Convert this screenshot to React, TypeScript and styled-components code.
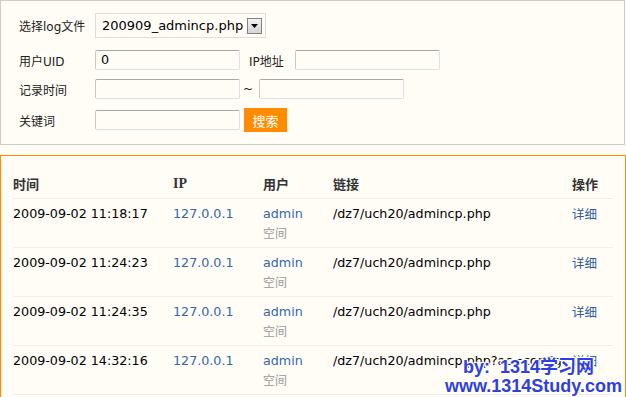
import React from "react";
import styled, { createGlobalStyle } from "styled-components";

const Global = createGlobalStyle`
  html, body { margin: 0; padding: 0; overflow: hidden; background: #fffdf6; }
  body {
    font-family: "DejaVu Sans", "Noto Sans CJK SC", sans-serif;
    font-size: 12px;
    color: #000;
  }
`;

const Page = styled.div`
  position: relative;
  width: 626px;
  height: 397px;
  overflow: hidden;
`;

const SearchPanel = styled.div`
  border: 1px solid #cccccc;
  background: #fffdf6;
  padding: 12px 0 12px 18px;
  box-sizing: border-box;
  width: 625px;
  display: flex;
  flex-direction: column;
  gap: 9px;
`;

const FormRow = styled.div<{ $h: number; $extra?: number }>`
  display: flex;
  align-items: center;
  height: ${(p) => p.$h}px;
  margin-bottom: ${(p) => p.$extra ?? 0}px;
`;

const Label = styled.span<{ $w?: number; $ml?: number }>`
  width: ${(p) => (p.$w ? `${p.$w}px` : "auto")};
  margin-left: ${(p) => p.$ml ?? 0}px;
  margin-right: ${(p) => (p.$w ? 0 : 11)}px;
  color: #222;
  white-space: nowrap;
`;

const TextInput = styled.div`
  width: 145px;
  height: 20px;
  box-sizing: border-box;
  border: 1px solid #dde1e6;
  border-top-color: #a8a8a8;
  border-left-color: #c8c8c8;
  border-radius: 2px;
  background: #fffdf6;
  padding-left: 5px;
  line-height: 18px;
  font-size: 12.7px;
  color: #000;
`;

const SelectBox = styled.div`
  display: flex;
  align-items: center;
  height: 25px;
  box-sizing: border-box;
  border: 1px solid #dddddd;
  background: #fffdf6;
  padding: 0 3px 0 6px;
  gap: 4px;
  font-size: 13px;
  color: #000;
`;

const DropButton = styled.span`
  display: flex;
  align-items: center;
  justify-content: center;
  width: 15px;
  height: 16px;
  box-sizing: border-box;
  border: 1px solid #808080;
  background: linear-gradient(#f2f2f2, #d4d4d4);
`;

const Tilde = styled.span`
  margin: 0 6px 0 3px;
  color: #222;
`;

const SearchButton = styled.button`
  margin-left: 4px;
  width: 43px;
  height: 24px;
  border: none;
  background: #ff8c00;
  color: #fff;
  font-family: "Noto Sans CJK SC", sans-serif;
  font-size: 13px;
  padding: 0;
`;

const ListPanel = styled.div`
  margin-top: 10px;
  border: 1px solid #ff8c00;
  background: #fffdf6;
  padding: 13px 11px 0 12px;
  height: 400px;
`;

const Row = styled.div<{ $head?: boolean }>`
  display: grid;
  grid-template-columns: 160px 90px 70px 239px 41px;
  width: 600px;
  border-bottom: 1px solid #eeeeee;
  padding: 5px 0;
  line-height: 19px;
  font-size: 12.7px;
  ${(p) => p.$head && `font-weight: bold; color: #333; font-size: 13px;`}
`;

const HeadCell = styled.div<{ $serif?: boolean }>`
  font-family: ${(p) =>
    p.$serif
      ? `"Liberation Serif", "Noto Sans CJK SC", serif`
      : `"Noto Sans CJK SC", sans-serif`};
  font-size: ${(p) => (p.$serif ? 14 : 13)}px;
`;

const Cell = styled.div`
  white-space: nowrap;
  overflow: hidden;
`;

const Link = styled.span`
  color: #3366aa;
  display: block;
`;

const Sub = styled.span`
  color: #999999;
  display: block;
  font-size: 12px;
  font-family: "Noto Sans CJK SC", sans-serif;
`;

const OpLink = styled.span`
  color: #2b5b9b;
  font-size: 12.5px;
  font-family: "Noto Sans CJK SC", sans-serif;
`;

const Watermark = styled.div`
  position: absolute;
  right: 4px;
  bottom: 1px;
  text-align: center;
  font-family: "Liberation Sans", "Noto Sans CJK SC", sans-serif;
  font-weight: bold;
  font-size: 18px;
  line-height: 19px;
  color: #3040dc;
  text-shadow: 1px 0 0 #fff, -1px 0 0 #fff, 0 1px 0 #fff, 0 -1px 0 #fff,
    1px 1px 1px #fff, -1px -1px 1px #fff, 1px -1px 1px #fff, -1px 1px 1px #fff;
`;

const WatermarkLine = styled.div<{ $shift?: number }>`
  padding-right: ${(p) => p.$shift ?? 0}px;
`;

const logs = [
  { time: "2009-09-02 11:18:17", link: "/dz7/uch20/admincp.php" },
  { time: "2009-09-02 11:24:23", link: "/dz7/uch20/admincp.php" },
  { time: "2009-09-02 11:24:35", link: "/dz7/uch20/admincp.php" },
  { time: "2009-09-02 14:32:16", link: "/dz7/uch20/admincp.php?ac=config" },
];

export default function App() {
  return (
    <Page>
      <Global />
      <SearchPanel>
        <FormRow $h={25} $extra={3}>
          <Label $w={76}>选择log文件</Label>
          <SelectBox>
            200909_admincp.php
            <DropButton>
              <svg width="7" height="4" viewBox="0 0 7 4">
                <path d="M0 0 L7 0 L3.5 4 Z" fill="#000" />
              </svg>
            </DropButton>
          </SelectBox>
        </FormRow>
        <FormRow $h={20}>
          <Label $w={76}>用户UID</Label>
          <TextInput>0</TextInput>
          <Label $ml={9}>IP地址</Label>
          <TextInput />
        </FormRow>
        <FormRow $h={20}>
          <Label $w={76}>记录时间</Label>
          <TextInput />
          <Tilde>~</Tilde>
          <TextInput />
        </FormRow>
        <FormRow $h={24}>
          <Label $w={76}>关键词</Label>
          <TextInput />
          <SearchButton>搜索</SearchButton>
        </FormRow>
      </SearchPanel>
      <ListPanel>
        <Row $head>
          <HeadCell>时间</HeadCell>
          <HeadCell $serif>IP</HeadCell>
          <HeadCell>用户</HeadCell>
          <HeadCell>链接</HeadCell>
          <HeadCell>操作</HeadCell>
        </Row>
        {logs.map((l, i) => (
          <Row key={i}>
            <Cell>{l.time}</Cell>
            <Cell>
              <Link>127.0.0.1</Link>
            </Cell>
            <Cell>
              <Link>admin</Link>
              <Sub>空间</Sub>
            </Cell>
            <Cell>{l.link}</Cell>
            <Cell>
              <OpLink>详细</OpLink>
            </Cell>
          </Row>
        ))}
      </ListPanel>
      <Watermark>
        <WatermarkLine $shift={10}>by:&nbsp; 1314学习网</WatermarkLine>
        <WatermarkLine>www.1314Study.com</WatermarkLine>
      </Watermark>
    </Page>
  );
}
